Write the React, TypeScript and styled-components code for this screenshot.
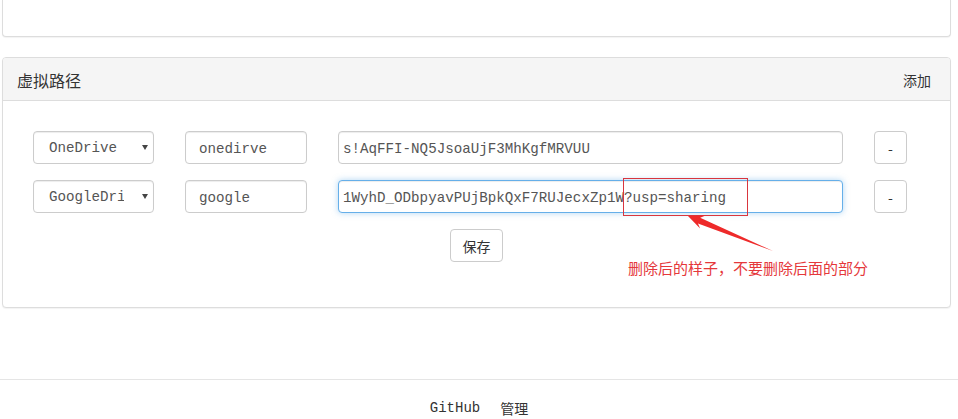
import React from "react";
import styled, { createGlobalStyle, css } from "styled-components";

const Global = createGlobalStyle`
  html, body { margin: 0; padding: 0; background: #fff; }
  body { font-family: "Noto Sans CJK SC", "Noto Sans", sans-serif; color: #333; font-size: 14px; }
  * { box-sizing: border-box; }
`;

const Page = styled.div`
  position: relative;
  width: 958px;
  height: 419px;
  overflow: hidden;
`;

const Main = styled.main`
  display: flex;
  flex-direction: column;
  gap: 20px;
  padding: 0 7px 0 2px;
`;

const Card = styled.section<{ $cutTop?: boolean; $height?: number }>`
  border: 1px solid #ddd;
  border-radius: 4px;
  background: #fff;
  box-shadow: 0 1px 1px rgba(0, 0, 0, 0.05);
  ${(p) => p.$height && css`height: ${p.$height}px;`}
  ${(p) =>
    p.$cutTop &&
    css`
      border-top: none;
      border-radius: 0 0 4px 4px;
    `}
`;

const CardHeader = styled.header`
  display: flex;
  align-items: center;
  justify-content: space-between;
  height: 43px;
  padding: 2px 19px 0 14px;
  background: #f5f5f5;
  border-bottom: 1px solid #ddd;
  border-radius: 3px 3px 0 0;
`;

const Title = styled.h3`
  margin: 0;
  font-size: 16px;
  font-weight: 400;
  color: #333;
`;

const HeaderLink = styled.a`
  font-size: 14px;
  color: #333;
  text-decoration: none;
`;

const CardBody = styled.div`
  display: flex;
  flex-direction: column;
  gap: 16px;
  padding: 30px 0 45px 30px;
`;

const Row = styled.div`
  display: flex;
  gap: 31px;
  height: 33px;
`;

const fieldBase = css`
  height: 33px;
  border: 1px solid #ccc;
  border-radius: 4px;
  background: #fff;
  color: #555;
  font-family: "Liberation Mono", "DejaVu Sans Mono", monospace;
  font-size: 14.2px;
  line-height: 29px;
  outline: none;
  box-shadow: inset 0 1px 1px rgba(0, 0, 0, 0.075);
`;

const SelectWrap = styled.div`
  position: relative;
  width: 121px;
  height: 33px;
`;

const Select = styled.select`
  ${fieldBase}
  width: 121px;
  padding: 2px 29px 0 15px;
  appearance: none;
  -webkit-appearance: none;
  text-overflow: clip;
`;

const Caret = styled.svg`
  position: absolute;
  right: 6px;
  top: 14px;
  pointer-events: none;
`;

const Input = styled.input<{ $w: number; $pad: number; $focus?: boolean }>`
  ${fieldBase}
  width: ${(p) => p.$w}px;
  padding: 2px ${(p) => p.$pad}px 0;
  ${(p) =>
    p.$focus &&
    css`
      border-color: #66afe9;
      box-shadow: inset 0 1px 1px rgba(0, 0, 0, 0.075), 0 0 6px rgba(102, 175, 233, 0.5);
    `}
`;

const Button = styled.button<{ $w: number }>`
  width: ${(p) => p.$w}px;
  height: 33px;
  padding: 0;
  border: 1px solid #ccc;
  border-radius: 4px;
  background: #fff;
  color: #333;
  font-family: "Noto Sans CJK SC", "Liberation Sans", sans-serif;
  font-size: 14px;
  cursor: pointer;
`;

const Center = styled.div`
  display: flex;
  justify-content: center;
  padding-right: 30px;
`;

const Footer = styled.footer`
  margin-top: 71px;
  border-top: 1px solid #e5e5e5;
  display: flex;
  justify-content: center;
  gap: 20px;
  padding: 18px 0 0 0;
`;

const FooterLink = styled.a<{ $mono?: boolean }>`
  font-size: 14px;
  line-height: 20px;
  color: #333;
  text-decoration: none;
  font-family: ${(p) =>
    p.$mono ? '"Liberation Mono", monospace' : '"Noto Sans CJK SC", sans-serif'};
`;

const Overlay = styled.svg`
  position: absolute;
  left: 0;
  top: 0;
  pointer-events: none;
`;

const Note = styled.div`
  position: absolute;
  left: 628px;
  top: 258px;
  font-size: 15px;
  line-height: 20px;
  color: #e5383b;
  font-family: "Noto Sans CJK SC", sans-serif;
  white-space: nowrap;
`;

type Mount = { drive: string; name: string; path: string; focus?: boolean };

const mounts: Mount[] = [
  { drive: "OneDrive", name: "onedirve", path: "s!AqFFI-NQ5JsoaUjF3MhKgfMRVUU" },
  {
    drive: "GoogleDrive",
    name: "google",
    path: "1WyhD_ODbpyavPUjBpkQxF7RUJecxZp1W?usp=sharing",
    focus: true,
  },
];

export default function App() {
  return (
    <Page>
      <Global />
      <Main>
        <Card $cutTop $height={37} />
        <Card>
          <CardHeader>
            <Title>虚拟路径</Title>
            <HeaderLink href="#">添加</HeaderLink>
          </CardHeader>
          <CardBody>
            {mounts.map((m) => (
              <Row key={m.name}>
                <SelectWrap>
                  <Select defaultValue={m.drive}>
                    <option value="OneDrive">OneDrive</option>
                    <option value="GoogleDrive">GoogleDrive</option>
                  </Select>
                  <Caret width="6" height="5" viewBox="0 0 6 5">
                    <polygon points="0,0 6,0 3,5" fill="#444" />
                  </Caret>
                </SelectWrap>
                <Input $w={122} $pad={13} defaultValue={m.name} />
                <Input $w={505} $pad={4} $focus={m.focus} defaultValue={m.path} />
                <Button $w={33}>-</Button>
              </Row>
            ))}
            <Center>
              <Button $w={53}>保存</Button>
            </Center>
          </CardBody>
        </Card>
      </Main>
      <Footer>
        <FooterLink $mono href="#">GitHub</FooterLink>
        <FooterLink href="#">管理</FooterLink>
      </Footer>
      <Overlay width="958" height="419" viewBox="0 0 958 419">
        <rect x="623.5" y="178.5" width="124" height="37" fill="none" stroke="#d9363e" strokeWidth="1" />
        <polygon
          points="688,216 700.1,228.6 698.0,223.4 773,251 700.2,217.8 705.5,215.6"
          fill="#ee2a2a"
        />
      </Overlay>
      <Note>删除后的样子，不要删除后面的部分</Note>
    </Page>
  );
}
